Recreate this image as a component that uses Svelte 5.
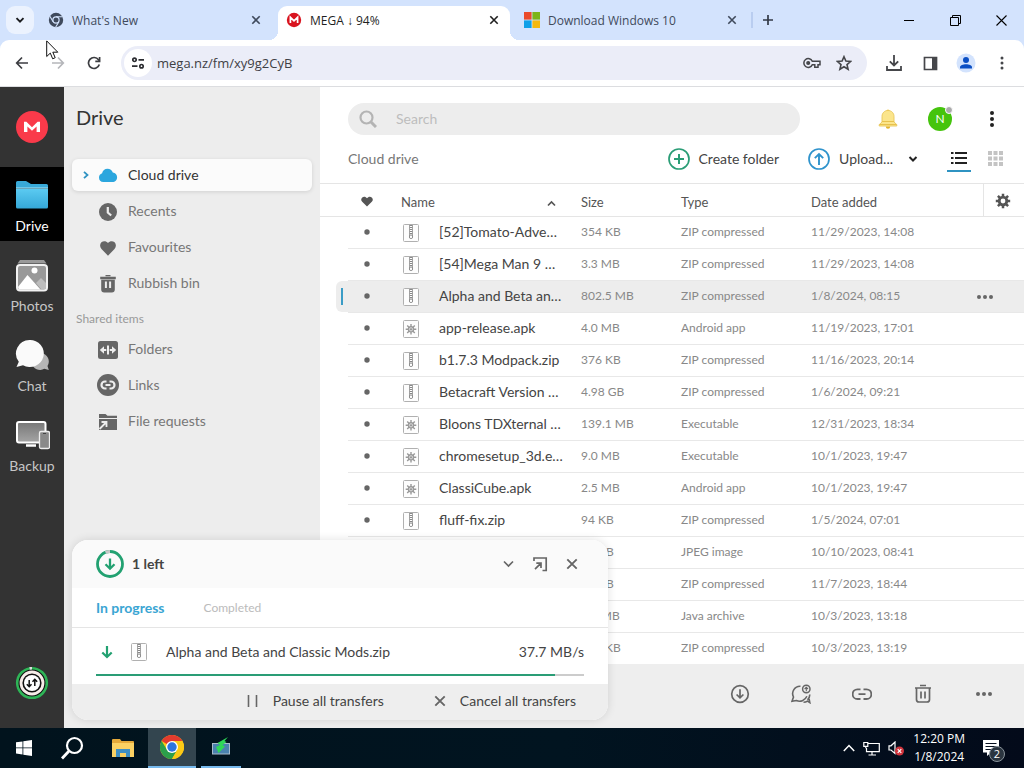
<script>
  const tabs = [
    { title: "What's New", icon: 'chrome', active: false },
    { title: 'MEGA ↓ 94%', icon: 'mega', active: true },
    { title: 'Download Windows 10', icon: 'ms', active: false },
  ];

  const rail = [
    { label: 'Drive', icon: 'folder', active: true },
    { label: 'Photos', icon: 'photos' },
    { label: 'Chat', icon: 'chat' },
    { label: 'Backup', icon: 'backup' },
  ];

  const mainItems = [
    { label: 'Cloud drive', icon: 'cloud', active: true },
    { label: 'Recents', icon: 'clock' },
    { label: 'Favourites', icon: 'heart' },
    { label: 'Rubbish bin', icon: 'bin' },
  ];
  const sharedItems = [
    { label: 'Folders', icon: 'shared' },
    { label: 'Links', icon: 'link' },
    { label: 'File requests', icon: 'request' },
  ];

  const files = [
    { name: '[52]Tomato-Adve…', size: '354 KB', type: 'ZIP compressed', date: '11/29/2023, 14:08', kind: 'zip' },
    { name: '[54]Mega Man 9 …', size: '3.3 MB', type: 'ZIP compressed', date: '11/29/2023, 14:08', kind: 'zip' },
    { name: 'Alpha and Beta an…', size: '802.5 MB', type: 'ZIP compressed', date: '1/8/2024, 08:15', kind: 'zip', selected: true },
    { name: 'app-release.apk', size: '4.0 MB', type: 'Android app', date: '11/19/2023, 17:01', kind: 'exe' },
    { name: 'b1.7.3 Modpack.zip', size: '376 KB', type: 'ZIP compressed', date: '11/16/2023, 20:14', kind: 'zip' },
    { name: 'Betacraft Version …', size: '4.98 GB', type: 'ZIP compressed', date: '1/6/2024, 09:21', kind: 'zip' },
    { name: 'Bloons TDXternal …', size: '139.1 MB', type: 'Executable', date: '12/31/2023, 18:34', kind: 'exe' },
    { name: 'chromesetup_3d.e…', size: '9.0 MB', type: 'Executable', date: '10/1/2023, 19:47', kind: 'exe' },
    { name: 'ClassiCube.apk', size: '2.5 MB', type: 'Android app', date: '10/1/2023, 19:47', kind: 'exe' },
    { name: 'fluff-fix.zip', size: '94 KB', type: 'ZIP compressed', date: '1/5/2024, 07:01', kind: 'zip' },
    { name: '', size: '94 KB', type: 'JPEG image', date: '10/10/2023, 08:41', kind: 'zip' },
    { name: '', size: '94 KB', type: 'ZIP compressed', date: '11/7/2023, 18:44', kind: 'zip' },
    { name: '', size: '3.3 MB', type: 'Java archive', date: '10/3/2023, 13:18', kind: 'zip' },
    { name: '', size: '354 KB', type: 'ZIP compressed', date: '10/3/2023, 13:19', kind: 'zip' },
  ];

  const progress = 94;
</script>

{#snippet closeIcon()}
  <svg width="10" height="10" viewBox="0 0 10 10" fill="none" stroke="currentColor" stroke-width="1.6"><path d="M1.3 1.3l7.4 7.4M8.7 1.3L1.3 8.7" /></svg>
{/snippet}

{#snippet fileIcon(kind)}
  <svg width="16" height="18" viewBox="0 0 16 18" fill="none">
    <rect x=".5" y=".5" width="15" height="17" rx="1" fill="#fdfdfd" stroke="#b0b0b0" />
    {#if kind === 'zip'}
      <path d="M6.500 1v13M9.500 1v13" stroke="#8c8c8c" stroke-width=".8" />
      <path d="M8 1v11" stroke="#888" stroke-width="2.400" stroke-dasharray="1 1" />
      <rect x="6.500" y="11" width="3" height="3.500" rx="1.200" fill="#fff" stroke="#777" stroke-width=".9" />
    {:else}
      <g stroke="#999" stroke-width="1.400"><path d="M8 4v10.600M2.700 9.300h10.600M4.200 5.500l7.600 7.600M11.800 5.500l-7.600 7.600" /></g>
      <circle cx="8" cy="9.300" r="3.200" fill="#999" /><circle cx="8" cy="9.300" r="1.600" fill="#999" stroke="#eee" stroke-width=".7" />
    {/if}
  </svg>
{/snippet}

{#snippet treeIcon(name)}
  <svg width="22" height="22" viewBox="0 0 22 22" fill="#666">
    {#if name === 'cloud'}
      <path fill="#2ba6de" d="M6.4 18A4.6 4.6 0 0 1 2 13.500c0-2 1.300-3.700 3.100-4.300C5.500 6.700 7.800 4.700 10.500 4.700c2.500 0 4.600 1.500 5.300 3.700 2.500.3 4.300 2.300 4.300 4.800 0 2.700-2 4.800-4.600 4.800z" />
    {:else if name === 'clock'}
      <circle cx="11" cy="12" r="9" /><path d="M10.800 7v5.500l3.400 3" fill="none" stroke="#ededed" stroke-width="2.200" />
    {:else if name === 'heart'}
      <path d="M11 19.800L4.500 13C2.600 11 2.700 8 4.400 6.300c1.900-1.800 4.900-1.500 6.600.7 1.700-2.200 4.700-2.500 6.600-.7C19.300 8 19.400 11 17.500 13z" />
    {:else if name === 'bin'}
      <path d="M8.500 3h5v1.200h-5zM3.200 4.800h15.600v2.400H3.200zM4.200 7.800h13.600v9.700a3 3 0 0 1-3 3H7.200a3 3 0 0 1-3-3z" /><path d="M8.900 9.500v6.500M13.100 9.500v6.500" stroke="#ededed" stroke-width="2" />
    {:else if name === 'shared'}
      <rect x="1" y="3" width="20" height="18" rx="2.500" /><path d="M11 7.500v9" stroke="#eee" stroke-width="2" /><path d="M2.800 12L7 8.300v2.600h2.300v2.200H7v2.600zM19.200 12L15 8.300v2.600h-2.300v2.200H15v2.600z" fill="#eee" />
    {:else if name === 'link'}
      <circle cx="11" cy="11" r="11" /><g fill="none" stroke="#eee" stroke-width="2.200"><path d="M9.500 14.500H8a3.500 3.500 0 0 1 0-7h1.500M12.500 7.500H14a3.500 3.500 0 0 1 0 7h-1.500M8.500 11h5" /></g>
    {:else}
      <path d="M2 4h6.500l2 1.700H20V8H2zM2 9h18v11H2z" /><path d="M2.500 19L9 12.500M4.500 12h5v5" stroke="#ededed" stroke-width="1.800" fill="none" />
    {/if}
  </svg>
{/snippet}

{#snippet treeItem(item)}
  <a class="tree-item" class:current={item.active} href="#{item.icon}">
    <span class="twist">
      {#if item.active}
        <svg width="6" height="8" viewBox="0 0 6 8" fill="none" stroke="#2f93c2" stroke-width="1.800"><path d="M1 .8L4.500 4 1 7.200" /></svg>
      {/if}
    </span>
    {@render treeIcon(item.icon)}
    <span>{item.label}</span>
  </a>
{/snippet}

<div class="screen">
  <header class="tabstrip">
    <button class="tabsearch" aria-label="Search tabs">
      <svg width="10" height="10" viewBox="0 0 10 10" fill="none" stroke="#1b1c1f" stroke-width="1.900"><path d="M1.500 3.200L5 6.700l3.500-3.500" /></svg>
    </button>
    <nav class="tabs" aria-label="Tabs">
      {#each tabs as tab}
        <div class="tab" class:active={tab.active}>
          <svg width="16" height="16" viewBox="0 0 16 16">
            {#if tab.icon === 'chrome'}
              <circle cx="8" cy="8" r="7.200" fill="#3f4a5c" /><circle cx="8" cy="8" r="3.100" fill="#3f4a5c" stroke="#d3e3fd" stroke-width="1.200" />
              <path d="M8 4.700h6.500M5.100 9.700L1.900 4.200M10.900 9.700L7.600 15.200" stroke="#d3e3fd" stroke-width="1.100" />
            {:else if tab.icon === 'mega'}
              <circle cx="8" cy="8" r="7.200" fill="#d9141f" /><path d="M4.400 11V5.300L8 8.800l3.600-3.500V11" fill="none" stroke="#fff" stroke-width="1.700" />
            {:else}
              <path d="M0 0h7.600v7.600H0z" fill="#ea4b2b" /><path d="M8.400 0H16v7.600H8.400z" fill="#7bb518" /><path d="M0 8.400h7.600V16H0z" fill="#10a0e8" /><path d="M8.400 8.400H16V16H8.400z" fill="#f5b80f" />
            {/if}
          </svg>
          <span class="tab-title">{tab.title}</span>
          <button class="tab-close" aria-label="Close tab">{@render closeIcon()}</button>
        </div>
      {/each}
    </nav>
    <button class="newtab" aria-label="New tab">
      <svg width="12" height="12" viewBox="0 0 12 12" stroke="#333a46" stroke-width="1.700"><path d="M6 1v10M1 6h10" /></svg>
    </button>
    <div class="winctl">
      <button aria-label="Minimise"><svg width="10" height="10" viewBox="0 0 10 10" stroke="#000"><path d="M0 5.500h10" /></svg></button>
      <button aria-label="Restore"><svg width="11" height="11" viewBox="0 0 11 11" fill="none" stroke="#000"><path d="M.5 2.500h8v8h-8zM2.500 2.500v-2h8v8h-2" /></svg></button>
      <button aria-label="Close"><svg width="11" height="11" viewBox="0 0 11 11" fill="none" stroke="#000" stroke-width="1.100"><path d="M.5.5l10 10M10.500.5l-10 10" /></svg></button>
    </div>
  </header>

  <div class="toolbar">
    <button aria-label="Back"><svg width="14" height="14" viewBox="0 0 14 14" fill="none" stroke="#3c3d41" stroke-width="1.700"><path d="M13 7H2M7 1.500L1.700 7 7 12.500" /></svg></button>
    <button aria-label="Forward"><svg width="14" height="14" viewBox="0 0 14 14" fill="none" stroke="#b5b6ba" stroke-width="1.700"><path d="M1 7h11M7 1.500L12.300 7 7 12.500" /></svg></button>
    <button aria-label="Reload"><svg width="14" height="14" viewBox="0 0 14 14" fill="none" stroke="#3c3d41" stroke-width="1.700"><path d="M12.300 8.500A5.500 5.500 0 1 1 11.500 3.800L12.600 5" /><path d="M12.600 1v4.400H8.300" /></svg></button>
    <div class="omnibox">
      <button class="site" aria-label="Site information">
        <svg width="14" height="12" viewBox="0 0 14 12" fill="none" stroke="#2b2c30" stroke-width="1.700"><circle cx="3.500" cy="2.800" r="1.700" /><path d="M7.500 2.800H13M1 9.200h5.500" /><circle cx="10.500" cy="9.200" r="1.700" /></svg>
      </button>
      <input aria-label="Address" value="mega.nz/fm/xy9g2CyB" />
      <button aria-label="Passwords"><svg width="18" height="12" viewBox="0 0 18 12" fill="none" stroke="#45464a" stroke-width="1.500"><path d="M9.300 4.300A4.400 4.400 0 1 0 9.300 7.700H11.800V10.200H15V7.700H17V4.300z" /><circle cx="5.200" cy="6" r="1.300" fill="#45464a" /></svg></button>
      <button aria-label="Bookmark"><svg width="16" height="16" viewBox="0 0 16 16" fill="none" stroke="#45464a" stroke-width="1.600"><path d="M8 1.700l1.900 4.400 4.700.4-3.600 3.100 1.100 4.700L8 11.800l-4.100 2.500L5 9.600 1.400 6.500l4.700-.4z" /></svg></button>
    </div>
    <button aria-label="Downloads"><svg width="16" height="16" viewBox="0 0 16 16" fill="none" stroke="#45464a" stroke-width="1.800"><path d="M8 0v10.200M3.800 6.300L8 10.500l4.200-4.200M1 11v4h14v-4" /></svg></button>
    <button aria-label="Side panel"><svg width="15" height="15" viewBox="0 0 15 15"><path d="M1.500 1.500h12v12h-12z" fill="none" stroke="#45464a" stroke-width="1.700" /><path d="M9 1h5v13H9z" fill="#45464a" /></svg></button>
    <button aria-label="Profile"><svg width="20" height="20" viewBox="0 0 20 20"><circle cx="10" cy="10" r="9.500" fill="#d3e3fd" /><circle cx="10" cy="7" r="3" fill="#0b4fc4" /><path d="M4 15.500v-1.300c0-2 3-3 6-3s6 1 6 3v1.300z" fill="#0b4fc4" /></svg></button>
    <button aria-label="Menu"><svg width="4" height="14" viewBox="0 0 4 14" fill="#45464a"><circle cx="2" cy="2" r="1.500" /><circle cx="2" cy="7" r="1.500" /><circle cx="2" cy="12" r="1.500" /></svg></button>
  </div>

  <main class="mega">
    <nav class="rail" aria-label="Sections">
      <a class="logo" href="#home" aria-label="MEGA">
        <svg width="32" height="32" viewBox="0 0 32 32"><circle cx="16" cy="16" r="16" fill="#f93a4a" /><path d="M8 21V10.700h2.400l5.600 5.500 5.600-5.500H24V21h-3.400v-5.600L16 19.800l-4.600-4.400V21z" fill="#fff" /></svg>
      </a>
      {#each rail as item}
        <a class="rail-item" class:current={item.active} href="#{item.icon}">
          <svg width="36" height="32" viewBox="-2 0 36 32">
            <defs>
              <linearGradient id="fold" x1="0" y1="0" x2="0" y2="1"><stop offset="0" stop-color="#5ccbf2" /><stop offset="1" stop-color="#35a8d8" /></linearGradient>
              <linearGradient id="grey" x1="0" y1="0" x2="0" y2="1"><stop offset="0" stop-color="#777" /><stop offset="1" stop-color="#a5a5a5" /></linearGradient>
            </defs>
            {#if item.icon === 'folder'}
              <path d="M0 8V2.500A1.500 1.500 0 0 1 1.500 1H10l5 3h15.500A1.500 1.500 0 0 1 32 5.500V8z" fill="#38a9d8" />
              <path d="M0 8.400h32V27a1.500 1.500 0 0 1-1.500 1.500h-29A1.500 1.500 0 0 1 0 27z" fill="url(#fold)" /><path d="M0 8h32" stroke="#a8e4f8" />
            {:else if item.icon === 'photos'}
              <path d="M4 0h24l2.500 3.500h-29z" fill="#9a9a9a" />
              <rect x="1" y="5" width="30" height="25.500" rx="3" fill="#999" stroke="#f2f2f2" stroke-width="2" />
              <path d="M2 27l9.500-12 13 14.500H3z" fill="#fff" /><path d="M20 23l5-5 5 5v6h-5z" fill="#bdbdbd" /><circle cx="18.500" cy="10.500" r="3" fill="#fff" />
            {:else if item.icon === 'chat'}
              <path d="M25 13a8.500 8.500 0 0 1 6.500 13l1.300 4-4.500-1.200A8.500 8.500 0 1 1 25 13z" fill="#b5b5b5" />
              <path d="M13.500 0A14 13.500 0 1 1 7 25.300L.5 27l2.300-5.300A13.500 13.500 0 0 1 13.500 0z" fill="#fafafa" />
            {:else}
              <rect x="1" y="2" width="28.500" height="20.500" rx="2" fill="url(#grey)" stroke="#fff" stroke-width="2" />
              <path d="M10 25.500h10" stroke="#fff" stroke-width="2.500" /><rect x="23.500" y="11.500" width="10" height="17" rx="1.500" fill="#8a8a8a" stroke="#eee" stroke-width="1.300" /><path d="M27 13.500h3" stroke="#444" />
            {/if}
          </svg>
          <span>{item.label}</span>
        </a>
      {/each}
      <button class="rail-transfer" aria-label="Transfers">
        <svg width="34" height="34" viewBox="0 0 34 34" fill="none">
          <circle cx="17" cy="17" r="16" fill="#111" /><circle cx="17" cy="17" r="14.800" stroke="#2fb457" stroke-width="2.600" /><path d="M14.600 2.400a15 15 0 0 1 2.400-.2" stroke="#ddd" stroke-width="2.600" />
          <circle cx="17" cy="17" r="11" stroke="#f6ece8" stroke-width="2.800" /><circle cx="17" cy="17" r="8" fill="#fff" />
          <path d="M14.200 14v6.500M11.800 18.200l2.400 2.500 2.300-2.500M19.800 20v-6.500M17.500 15.800l2.300-2.500 2.400 2.500" stroke="#111" stroke-width="1.500" />
        </svg>
      </button>
    </nav>

    <aside class="tree">
      <h1>Drive</h1>
      <div class="tree-list">
        {#each mainItems as item}{@render treeItem(item)}{/each}
        <h2>Shared items</h2>
        {#each sharedItems as item}{@render treeItem(item)}{/each}
      </div>
    </aside>

    <section class="content">
      <div class="topbar">
        <label class="search">
          <svg width="18" height="18" viewBox="0 0 18 18" fill="none" stroke="#b4b4b4"><circle cx="7.500" cy="7.500" r="6" stroke-width="2.200" /><path d="M12 12l5 5" stroke-width="3" /></svg>
          <input type="search" placeholder="Search" aria-label="Search" />
        </label>
        <button class="top-btn" aria-label="Notifications">
          <svg width="20" height="20" viewBox="0 0 20 20"><circle cx="10" cy="2.200" r="1.700" fill="#f2c94c" /><path d="M10 1.500c3.700 0 6 2.700 6 6v5.500l2.800 2.600v1.400H1.200v-1.400L4 13V7.500c0-3.300 2.300-6 6-6z" fill="#fbe58c" stroke="#e8c65a" stroke-width=".9" /><path d="M4 12.500h12M1.500 15.500h17" stroke="#e8c24e" /><path d="M7.800 17.500h4.400a2.200 2.200 0 0 1-4.400 0z" fill="#e3b32c" /></svg>
        </button>
        <button class="avatar" aria-label="Account"><span>N</span><i></i></button>
        <button class="top-btn" aria-label="Main menu"><svg width="4" height="16" viewBox="0 0 4 16" fill="#222"><circle cx="2" cy="2" r="2" /><circle cx="2" cy="8" r="2" /><circle cx="2" cy="14" r="2" /></svg></button>
      </div>

      <div class="actions">
        <span class="crumb">Cloud drive</span>
        <button class="action">
          <svg width="22" height="22" viewBox="0 0 22 22" fill="none" stroke="#2a9d76"><circle cx="11" cy="11" r="10" stroke-width="1.700" /><path d="M11 6v10M6 11h10" stroke-width="2" /></svg>
          Create folder
        </button>
        <button class="action upload">
          <svg width="22" height="22" viewBox="0 0 22 22" fill="none" stroke="#2f93cc"><circle cx="11" cy="11" r="10" stroke-width="1.700" /><path d="M11 17V6M6.800 10.200L11 6l4.200 4.200" stroke-width="1.900" /></svg>
          Upload...
          <svg class="caret" width="10" height="8" viewBox="0 0 10 8" fill="none" stroke="#222" stroke-width="2"><path d="M1.500 2L5 5.500 8.500 2" /></svg>
        </button>
        <button class="view on" aria-label="List view"><svg width="16" height="14" viewBox="0 0 16 14" fill="#222"><path d="M0 1h2.500v2H0zM4 1h12v2H4zM0 6h2.500v2H0zM4 6h12v2H4zM0 11h2.500v2H0zM4 11h12v2H4z" /></svg></button>
        <button class="view" aria-label="Grid view"><svg width="15" height="15" viewBox="0 0 15 15" fill="#c4c4c4"><path d="M0 0h4v4H0zM5.500 0h4v4h-4zM11 0h4v4h-4zM0 5.500h4v4H0zM5.500 5.500h4v4h-4zM11 5.500h4v4h-4zM0 11h4v4H0zM5.500 11h4v4h-4zM11 11h4v4h-4z" /></svg></button>
      </div>

      <table>
        <colgroup><col class="c-fav" /><col class="c-icon" /><col class="c-name" /><col class="c-size" /><col class="c-type" /><col /><col class="c-more" /></colgroup>
        <thead>
          <tr>
            <th class="fav" aria-label="Favourite"><svg width="12" height="11" viewBox="0 0 12 11" fill="#555"><path d="M6 10.500L1.200 5.700A3 3 0 0 1 1 1.700C2.400.2 4.800.4 6 2.300 7.200.4 9.600.2 11 1.700a3 3 0 0 1-.2 4z" /></svg></th>
            <th colspan="2" class="sorted"><span>Name</span><svg width="9" height="7" viewBox="0 0 9 7" fill="none" stroke="#555" stroke-width="1.700"><path d="M1 5.500L4.500 2 8 5.500" /></svg></th>
            <th>Size</th>
            <th>Type</th>
            <th>Date added</th>
            <th class="gear" aria-label="Columns"><svg width="16" height="16" viewBox="0 0 16 16" fill="none" stroke="#555"><path d="M8 .8v14.400M.8 8h14.400M2.900 2.900l10.200 10.200M13.100 2.900L2.900 13.100" stroke-width="2.500" /><circle cx="8" cy="8" r="3.800" fill="#fff" stroke-width="2.800" /></svg></th>
          </tr>
        </thead>
        <tbody>
          {#each files as f}
            <tr class:selected={f.selected}>
              <td class="fav"><svg width="6" height="6" viewBox="0 0 6 6" fill="#666"><circle cx="3" cy="3" r="2.700" /></svg></td>
              <td class="ficon">{@render fileIcon(f.kind)}</td>
              <td class="name">{f.name}</td>
              <td>{f.size}</td>
              <td>{f.type}</td>
              <td>{f.date}</td>
              <td class="more">{#if f.selected}<button aria-label="More"><svg width="16" height="4" viewBox="0 0 16 4" fill="#666"><circle cx="2" cy="2" r="2" /><circle cx="8" cy="2" r="2" /><circle cx="14" cy="2" r="2" /></svg></button>{/if}</td>
            </tr>
          {/each}
        </tbody>
      </table>

      <footer class="selection">
        <button aria-label="Download"><svg width="20" height="20" viewBox="0 0 20 20" fill="none" stroke="#666" stroke-width="1.700"><circle cx="10" cy="10" r="8.300" /><path d="M10 5.200v8.500M6.600 10.500l3.400 3.400 3.400-3.400" /></svg></button>
        <button aria-label="Send to chat"><svg width="20" height="20" viewBox="0 0 20 20" fill="none" stroke="#666" stroke-width="1.600"><path d="M9.500 2.200A7.400 7.400 0 0 0 2.500 13L1 17.300l4.300-.8c4 1.800 8.700.2 10.600-4.200" /><path d="M18.800 10.500c0 2.500-.8 4-2.300 5.300M12.500 18.300c1.800 0 3-.5 4-1.200l2.300 1.500-.7-3.600" /><circle cx="15.300" cy="5" r="3.700" stroke-width="1.500" /><path d="M15.300 7.300V3.500M13.600 5l1.700-1.700L17 5" stroke-width="1.100" /></svg></button>
        <button aria-label="Share link"><svg width="20" height="20" viewBox="0 0 20 20" fill="none" stroke="#666" stroke-width="1.800"><path d="M8.500 15H5.500a4.800 4.800 0 0 1 0-9.700h3M11.500 5.300h3a4.800 4.800 0 0 1 0 9.700h-3M6.500 10.200h7" /></svg></button>
        <button aria-label="Delete"><svg width="20" height="20" viewBox="0 0 20 20" fill="none" stroke="#666" stroke-width="1.700"><path d="M7 1.500h6M2 4h16M3.500 4v11.500a2.500 2.500 0 0 0 2.500 2.500h8a2.500 2.500 0 0 0 2.500-2.500V4M8 7.500v7M12 7.500v7" /></svg></button>
        <button aria-label="More actions"><svg width="20" height="20" viewBox="0 0 20 20" fill="#666"><circle cx="4" cy="10" r="2" /><circle cx="10" cy="10" r="2" /><circle cx="16" cy="10" r="2" /></svg></button>
      </footer>
    </section>

    <section class="transfers" aria-label="Transfers">
      <div class="tr-head">
        <svg width="28" height="28" viewBox="0 0 28 28" fill="none" stroke="#22a171"><circle cx="14" cy="14" r="12.500" stroke-width="2.800" /><path d="M9.500 2.400A12.500 12.500 0 0 1 14 1.500" stroke="#c9c9c9" stroke-width="2.800" /><path d="M14 8.500v10M9.500 14.300l4.500 4.400 4.500-4.400" stroke-width="2.300" /></svg>
        <strong>1 left</strong>
        <button aria-label="Collapse"><svg width="11" height="8" viewBox="0 0 11 8" fill="none" stroke="#666" stroke-width="1.700"><path d="M1 1.500l4.500 4.500L10 1.500" /></svg></button>
        <button aria-label="Open transfer page"><svg width="16" height="16" viewBox="0 0 16 16" fill="none" stroke="#666" stroke-width="1.700"><path d="M2 5V2h12.200v12.500H10.500M3 13.200L8.500 7.700M4.300 7.200h4.700v4.700" /></svg></button>
        <button aria-label="Close transfers"><svg width="12" height="12" viewBox="0 0 12 12" fill="none" stroke="#666" stroke-width="1.900"><path d="M1.300 1.300l9.400 9.400M10.700 1.300l-9.400 9.400" /></svg></button>
      </div>
      <div class="tr-tabs">
        <button class="on">In progress</button>
        <button>Completed</button>
      </div>
      <div class="tr-row">
        <div class="tr-info">
          <svg width="12" height="14" viewBox="0 0 12 14" fill="none" stroke="#22a171" stroke-width="2.200"><path d="M6 1v11M1.300 7.500L6 12l4.700-4.500" /></svg>
          {@render fileIcon('zip')}
          <span class="tr-name">Alpha and Beta and Classic Mods.zip</span>
          <span>37.7 MB/s</span>
        </div>
        <div class="bar" role="progressbar" aria-valuenow={progress} aria-label="Download progress"><div style="width: {progress}%"></div></div>
      </div>
      <div class="tr-foot">
        <button><svg width="12" height="12" viewBox="0 0 12 12" stroke="#666" stroke-width="1.600"><path d="M1.500 0v12M9.500 0v12" /></svg>Pause all transfers</button>
        <button><svg width="12" height="12" viewBox="0 0 12 12" fill="none" stroke="#666" stroke-width="1.900"><path d="M1.300 1.300l9.400 9.400M10.700 1.300l-9.400 9.400" /></svg>Cancel all transfers</button>
      </div>
    </section>
  </main>

  <footer class="taskbar">
    <button aria-label="Start"><svg width="16" height="16" viewBox="0 0 16 16" fill="#fff"><path d="M0 2.300l6.500-.9v6.100H0zM7.300 1.300L16 0v7.500H7.300zM0 8.300h6.500v6.200L0 13.600zM7.300 8.300H16V16l-8.700-1.300z" /></svg></button>
    <button aria-label="Search"><svg width="24" height="24" viewBox="0 0 24 24" fill="none" stroke="#fff"><circle cx="14.500" cy="9.500" r="7.500" stroke-width="2.200" /><path d="M9 15l-7 7.500" stroke-width="2.800" /></svg></button>
    <button class="pinned" aria-label="File Explorer"><svg width="22" height="20" viewBox="0 0 22 20"><path d="M0 2a1 1 0 0 1 1-1h7l1.500 2H21a1 1 0 0 1 1 1v14H0z" fill="#e5a93a" /><path d="M0 5h22v14H0z" fill="#fbd163" /><path d="M4 19v-8h14v8h-4v-4H8v4z" fill="#3f8fc4" /></svg></button>
    <button class="open" aria-label="Chrome">
      <svg width="24" height="24" viewBox="0 0 24 24"><circle cx="12" cy="12" r="12" fill="#fbc916" /><path d="M12 12L1.600 6A12 12 0 0 1 22.400 6z" fill="#e33b2e" /><path d="M1.600 6A12 12 0 0 0 12 24l5.200-9L12 12l-5 2.700z" fill="#2c9f4b" /><path d="M12 6h10.400A12 12 0 0 1 12 24l5.200-9z" fill="#fbc916" /><circle cx="12" cy="12" r="6" fill="#fff" /><circle cx="12" cy="12" r="4.700" fill="#2d75e0" /></svg>
    </button>
    <button class="running" aria-label="Network tool"><svg width="20" height="20" viewBox="0 0 20 20"><rect x="1.500" y="6.500" width="17" height="10.500" fill="#4a82ae" stroke="#a9bccb" /><path d="M17 0L6.500 6 9 8 5 10l2.500 6L14 9.500l-2.500-1.500 4-3-2-1z" fill="#2ed857" /></svg></button>
    <div class="tray">
      <svg width="12" height="8" viewBox="0 0 12 8" fill="none" stroke="#fff" stroke-width="1.500"><path d="M.8 7L6 1.500 11.200 7" /></svg>
      <svg width="17" height="15" viewBox="0 0 17 15" fill="none" stroke="#fff" stroke-width="1.200"><path d="M5 2.500h11.300v8.200H3.500V7M9 10.700v3M5.500 14h7.500M.8 1.500h4v3.800h-4zM2.800 5.300v2" /></svg>
      <svg width="17" height="15" viewBox="0 0 17 15" fill="none"><path d="M1 4.800h2L7 1v11.500L3 9H1z" stroke="#fff" stroke-width="1.200" /><circle cx="11.500" cy="10" r="4.500" fill="#d0343c" /><path d="M9.700 8.200l3.600 3.600M13.300 8.200l-3.600 3.600" stroke="#fff" stroke-width="1.200" /></svg>
      <div class="clock"><span>12:20 PM</span><span>1/8/2024</span></div>
      <div class="notes">
        <svg width="18" height="18" viewBox="0 0 18 18"><path d="M1 1h16v12.500H9L5 17v-3.500H1z" fill="#fff" /><path d="M3.500 4.500h11M3.500 7.500h11M3.500 10.500h7" stroke="#07101f" stroke-width="1.200" /></svg>
        <b>2</b>
      </div>
    </div>
  </footer>

  <svg class="cursor" width="13" height="20" viewBox="0 0 13 20" fill="#fff" stroke="#111"><path d="M.7.900v15.600l3.600-3.400 2.400 5.700 2.500-1.100-2.400-5.500h5z" /></svg>
</div>

<style>
  :global(body) { margin: 0; }
  * { box-sizing: border-box; }
  .screen { position: relative; min-height: 100vh; display: flex; flex-direction: column; overflow: hidden; background: #d3e3fd; font-family: Lato, sans-serif; font-size: 14px; line-height: 18px; color: #444; }
  button { border: 0; padding: 0; margin: 0; background: none; font: inherit; color: inherit; display: flex; align-items: center; justify-content: center; }
  a { color: inherit; text-decoration: none; }
  svg { display: block; flex: none; }
  input { border: 0; outline: 0; background: none; padding: 0; min-width: 0; font: inherit; color: inherit; }

  .tabstrip { display: flex; align-items: stretch; height: 40px; padding-left: 6px; font-family: "Open Sans", sans-serif; font-size: 12px; color: #3f4a5c; }
  .tabsearch { width: 28px; height: 28px; margin: 6px 6px 0 0; border-radius: 9px; background: #ebf2fe; flex: none; }
  .tabs { display: flex; gap: 6px; flex: 0 1 708px; min-width: 0; }
  .tab { position: relative; flex: 1; min-width: 0; display: flex; align-items: center; gap: 8px; margin-top: 6px; padding: 0 8px 6px; }
  .tab-title { flex: 1; min-width: 0; padding-top: 1px; white-space: nowrap; overflow: hidden; }
  .tab-close { width: 16px; height: 16px; color: #3f4a5c; }
  .tab.active { background: #fff; color: #1f1f1f; border-radius: 9px 9px 0 0; }
  .tab.active .tab-close { color: #1f1f1f; }
  .tab.active::before, .tab.active::after { content: ""; position: absolute; bottom: 0; width: 9px; height: 9px; }
  .tab.active::before { right: 100%; background: radial-gradient(circle at 0 0, transparent 9px, #fff 9px); }
  .tab.active::after { left: 100%; background: radial-gradient(circle at 100% 0, transparent 9px, #fff 9px); }
  .newtab { width: 32px; height: 16px; margin: 12px 0 0 3px; border-left: 2px solid #b9cdf0; }
  .winctl { display: flex; margin-left: auto; }
  .winctl button { width: 46px; }

  .toolbar { display: flex; align-items: center; height: 47px; padding: 0 4px; background: #fff; border-bottom: 1px solid #dcdde0; border-radius: 9px 9px 0 0; font-family: "Open Sans", sans-serif; }
  .toolbar > button { width: 36px; height: 36px; flex: none; }
  .omnibox { flex: 1; display: flex; align-items: center; height: 34px; margin: 0 9px; padding: 0 7px 0 3px; border-radius: 17px; background: #ebedf8; }
  .omnibox button { width: 32px; height: 28px; }
  .omnibox .site { width: 28px; border-radius: 14px; background: #fff; margin-right: 5px; }
  .omnibox input { flex: 1; font-size: 13px; color: #3f4045; }

  .mega { position: relative; flex: 1; display: grid; grid-template-columns: 64px 256px 1fr; background: #fff; }
  .rail { display: flex; flex-direction: column; gap: 6px; background: #333; color: #c6c6c6; }
  .logo { display: flex; align-items: center; justify-content: center; height: 80px; margin-bottom: -6px; }
  .rail-item { display: flex; flex-direction: column; align-items: center; gap: 5px; padding: 13px 0 6px; }
  .rail-item.current { background: #000; color: #fff; }
  .rail-transfer { margin: auto 0 28px; }

  .tree { background: #ededed; padding: 18px 8px 0; color: #777; }
  .tree h1 { margin: 0 4px 30px; font-size: 20px; line-height: 24px; font-weight: 400; color: #333; }
  .tree-list { display: flex; flex-direction: column; gap: 4px; }
  .tree h2 { margin: 0 4px; padding-top: 6px; font-size: 12px; line-height: 20px; font-weight: 400; color: #999; }
  .tree-item { display: flex; align-items: center; height: 32px; padding-left: 11px; border-radius: 6px; }
  .tree-item span:last-child { margin-left: 9px; }
  .twist { width: 14px; }
  .tree-item.current { background: #fbfbfb; color: #333; box-shadow: 0 1px 4px rgba(0, 0, 0, 0.12); }

  .content { display: flex; flex-direction: column; min-width: 0; }
  .topbar { display: flex; align-items: center; padding: 16px 20px 0 28px; }
  .search { flex: 1; display: flex; align-items: center; gap: 19px; height: 32px; margin-right: 76px; padding: 0 11px 1px; border-radius: 16px; background: #ededed; }
  .search input { flex: 1; }
  .search input::placeholder { color: #bdbdbd; opacity: 1; }
  .top-btn { width: 24px; height: 24px; }
  .avatar { position: relative; width: 24px; height: 24px; margin: 0 28px; border-radius: 12px; background: #45c40d; color: #fff; font-size: 12px; }
  .avatar i { position: absolute; top: -1px; right: -1px; width: 8px; height: 8px; border-radius: 4px; background: #aaa; border: 1px solid #fff; }
  .actions { display: flex; align-items: center; height: 49px; padding: 0 17px 0 28px; border-bottom: 1px solid #e5e5e5; }
  .crumb { flex: 1; color: #777; }
  .action { gap: 9px; }
  .upload { margin: 0 29px; }
  .caret { margin-left: 6px; }
  .view { width: 24px; height: 26px; margin-left: 12px; border-bottom: 2px solid transparent; }
  .view.on { margin-left: 0; border-color: #2f93c2; }

  table { width: calc(100% - 28px); margin-left: 28px; table-layout: fixed; border-collapse: separate; border-spacing: 0; font-size: 12px; line-height: 16px; color: #888; }
  .c-fav { width: 38px; } .c-icon { width: 43px; } .c-name { width: 142px; } .c-size { width: 100px; } .c-type { width: 130px; } .c-more { width: 41px; }
  th { height: 33px; padding: 3px 0 0 10px; font-weight: 400; font-size: 13px; color: #555; text-align: left; border-bottom: 1px solid #e5e5e5; }
  th.fav { position: relative; padding: 2px 0 0; }
  th.fav::before { content: ""; position: absolute; left: -28px; bottom: -1px; width: 28px; height: 1px; background: #e5e5e5; }
  .fav svg { margin: 0 auto; }
  th.sorted { padding-left: 15px; }
  th.sorted span { display: inline-block; width: 146px; }
  th.sorted svg { display: inline-block; }
  th.gear { padding: 1px 0 0 11px; border-left: 1px solid #e5e5e5; }
  td { height: 32px; padding: 0 0 2px 10px; border-bottom: 1px solid #e8e8e8; white-space: nowrap; }
  tr:last-child td { height: 31px; border-bottom: 0; }
  td.fav { position: relative; padding: 0 0 2px; }
  td.ficon { padding: 1px 0 0 17px; }
  td.name { font-size: 14px; color: #444; overflow: hidden; }
  td.more { padding: 0; }
  .selected td { background: #ededed; }
  .selected td.fav::before { content: ""; position: absolute; left: -12px; top: 0; width: 12px; height: 31px; background: #ededed; border-radius: 6px 0 0 6px; }
  .selected td.fav::after { content: ""; position: absolute; left: -7px; top: 7px; width: 2px; height: 17px; background: #3a9cc6; }
  td.more button { margin-left: -6px; }

  .selection { margin-top: auto; display: flex; align-items: center; justify-content: flex-end; gap: 37px; height: 64px; padding: 0 28px 4px; background: #eee; }
  .selection button { width: 24px; height: 24px; }

  .transfers { position: absolute; left: 72px; bottom: 8px; width: 536px; display: flex; flex-direction: column; border-radius: 16px; background: #fff; box-shadow: 0 0 10px rgba(0, 0, 0, 0.12); overflow: hidden; }
  .tr-head { display: flex; align-items: center; height: 48px; padding: 0 24px; background: #fafafa; }
  .tr-head strong { flex: 1; margin-left: 8px; font-weight: 700; }
  .tr-head button { width: 24px; height: 24px; margin-left: 8px; }
  .tr-tabs { display: flex; gap: 39px; height: 40px; padding: 0 24px; border-bottom: 1px solid #e5e5e5; font-size: 12px; color: #bbb; }
  .tr-tabs .on { font-size: 14px; font-weight: 700; color: #3aa5d3; }
  .tr-row { display: flex; flex-direction: column; height: 56px; padding: 0 24px; }
  .tr-info { display: flex; align-items: center; height: 46px; padding: 2px 0 0 5px; }
  .tr-info svg + :global(svg) { margin-left: 18px; }
  .tr-name { flex: 1; margin-left: 19px; }
  .bar { height: 2px; background: #ccc; }
  .bar div { height: 2px; background: #2a9d76; }
  .tr-foot { display: flex; align-items: center; justify-content: flex-end; gap: 50px; height: 36px; padding: 0 32px 2px; background: #eee; }
  .tr-foot button { gap: 14px; }

  .taskbar { display: flex; align-items: stretch; height: 40px; background: linear-gradient(90deg, #01131d, #011420 55%, #030a1a); color: #fff; font-family: "Open Sans", sans-serif; }
  .taskbar button { width: 48px; margin-right: 1px; }
  .taskbar button:first-child { margin-right: 0; }
  .taskbar .pinned { margin-left: 2px; }
  .taskbar .open { background: #33454f; border-bottom: 2px solid #76b9ed; }
  .taskbar .running { width: 40px; margin-left: 4px; border-bottom: 2px solid #76b9ed; }
  .tray { display: flex; align-items: center; gap: 8px; margin-left: auto; padding-right: 16px; }
  .clock { display: flex; flex-direction: column; align-items: center; margin-right: 9px; font-size: 12px; line-height: 18px; }
  .notes { position: relative; width: 26px; }
  .notes b { position: absolute; left: 7px; top: 7px; width: 16px; height: 16px; border-radius: 8px; background: #2b3540; border: 1px solid #8a949c; font-size: 11px; line-height: 14px; text-align: center; font-weight: 400; }

  .cursor { position: absolute; left: 46px; top: 40px; }
</style>
